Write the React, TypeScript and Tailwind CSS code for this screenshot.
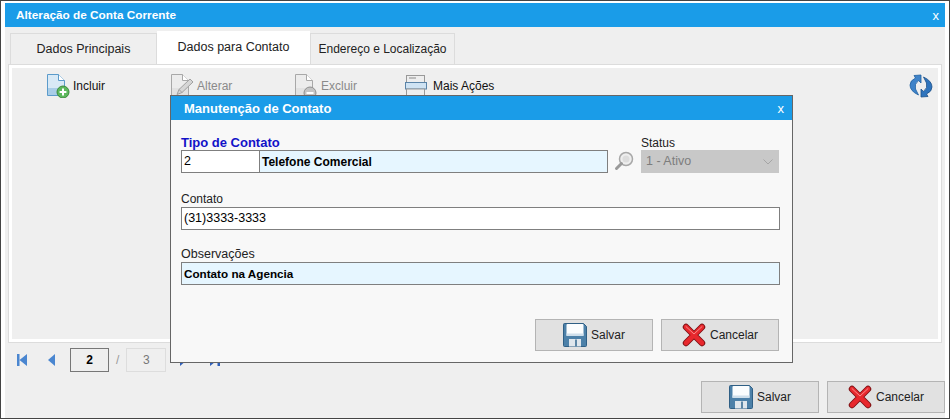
import { ReactNode } from 'react'

function SaveIcon() {
  return (
    <svg width="24" height="24" viewBox="0 0 24 24">
      <path d="M.5 1.5 Q.5 .5 1.5 .5 H20.5 L23.5 3.5 V22.5 Q23.5 23.5 22.5 23.5 H1.5 Q.5 23.5 .5 22.5 Z" fill="#4c80a8" stroke="#2f5f85" />
      <rect x="3.5" y="1" width="17" height="12" rx="1" fill="#fbfdfe" />
      <rect x="3.5" y="10.5" width="17" height="2.5" fill="#cfdfeb" />
      <rect x="6" y="16" width="12" height="7.5" fill="#dfe6ec" />
      <rect x="12" y="16.5" width="2" height="7" fill="#5c85a5" />
    </svg>
  )
}

function CancelIcon() {
  return (
    <svg width="24" height="24" viewBox="0 0 24 24">
      <path d="M4 4 L20 20 M20 4 L4 20" stroke="#7c0f12" strokeWidth="6.4" strokeLinecap="round" />
      <path d="M4 4 L20 20 M20 4 L4 20" stroke="#e8282d" strokeWidth="4.6" strokeLinecap="round" />
      <path d="M4 3.6 L12 11 L20 3.6" stroke="#f98a8a" strokeWidth="1" fill="none" strokeLinecap="round" />
    </svg>
  )
}

function DocIcon({ kind }: { kind: 'add' | 'edit' | 'remove' }) {
  const muted = kind !== 'add'
  const fill = muted ? '#ececec' : '#d8e9f6'
  const line = muted ? '#a8a8a8' : '#5b9bcb'
  return (
    <svg width="24" height="24" viewBox="0 0 24 24">
      <path d="M1.5 .5 H12.5 L18.5 6.5 V21.5 H1.5 Z" fill={fill} stroke={line} />
      <path d="M12.5 .5 V6.5 H18.5" fill="#fff" stroke={line} />
      <rect x="2" y="14" width="16" height="7" fill={muted ? '#e2e2e2' : '#a9cde8'} />
      {kind === 'add' && (
        <>
          <circle cx="17" cy="18" r="6" fill="#5cb85c" stroke="#3b8a3b" />
          <path d="M13.6 18 H20.4 M17 14.6 V21.4" stroke="#fff" strokeWidth="2" />
        </>
      )}
      {kind === 'edit' && (
        <>
          <path d="M7 20.5 L9 15.5 L20 5 L23 8 L12 18.5 Z" fill="#d6d6d6" stroke="#a0a0a0" />
          <path d="M9 15.5 L12 18.5" stroke="#a0a0a0" />
        </>
      )}
      {kind === 'remove' && (
        <>
          <circle cx="16" cy="19" r="6" fill="#c4c4c4" stroke="#8f8f8f" />
          <path d="M12.5 19 H19.5" stroke="#fff" strokeWidth="2" />
        </>
      )}
    </svg>
  )
}

function Field({ className, children }: { className: string; children?: ReactNode }) {
  return (
    <div className={`flex h-[23px] items-center border border-[#7f7f7f] px-[2px] ${className}`}>
      {children}
    </div>
  )
}

function FooterButton({ icon, label }: { icon: ReactNode; label: string }) {
  return (
    <button className="flex h-[32px] w-[118px] items-center justify-center gap-[4px] border border-[#b4b4b4] bg-[#e1e1e1] text-[12px] text-[#222]">
      {icon}
      {label}
    </button>
  )
}

function Toolbar() {
  return (
    <div className="flex items-start pl-[34px] pt-[6px] text-[12px]">
      <div className="flex w-[124px] items-center gap-[3px] text-[#111]">
        <DocIcon kind="add" />
        Incluir
      </div>
      <div className="flex w-[124px] items-center gap-[3px] text-[#8a8a8a]">
        <DocIcon kind="edit" />
        Alterar
      </div>
      <div className="flex w-[110px] items-center gap-[3px] text-[#8a8a8a]">
        <DocIcon kind="remove" />
        Excluir
      </div>
      <div className="flex items-center gap-[5px] text-[#111]">
        <svg width="24" height="24" viewBox="0 0 24 24">
          <rect x="2.5" y="1.5" width="18" height="7" fill="#eee" stroke="#999" />
          <path d="M5 4 H12 M5 11 H12" stroke="#8a8a8a" />
          <rect x="1.5" y="8.5" width="21" height="6.5" fill="#cfe3f3" stroke="#5b84a8" />
          <rect x="2.5" y="15" width="18" height="7" fill="#eee" stroke="#999" />
        </svg>
        Mais Ações
      </div>
      <svg className="ml-auto mr-[5px]" width="24" height="24" viewBox="0 0 24 24">
        <path d="M12 1 V9 L9.5 6.5 Q5 10 6.5 15 L9.5 21 Q1 17 1 11 Q1 6.5 6.5 4 L5 1.5 Z" fill="#3f83c9" stroke="#1f5f9f" strokeWidth=".8" />
        <path d="M12 23 V15 L14.5 17.5 Q19 14 17.5 9 L14.5 3 Q23 7 23 13 Q23 17.5 17.5 20 L19 22.5 Z" fill="#2f74bd" stroke="#1d5088" strokeWidth=".8" />
      </svg>
    </div>
  )
}

function ContactDialog() {
  return (
    <div className="absolute left-[169px] top-[94px] flex h-[268px] w-[623px] flex-col border border-[#666] bg-[#f8f8f8]">
      <div className="flex h-[24px] shrink-0 items-center justify-between bg-[#1a9ce8] pl-[13px] pr-[8px] pt-[1px] text-white">
        <span className="text-[13px] font-bold">Manutenção de Contato</span>
        <span className="text-[13px]">x</span>
      </div>
      <div className="flex flex-col px-[10px] pt-[15px]">
        <div className="flex items-end">
          <div className="flex flex-col">
            <span className="text-[13px] font-bold leading-[15px] text-[#1212c8]">Tipo de Contato</span>
            <div className="flex text-[12px]">
              <Field className="w-[79px] bg-white text-[12.5px]">2</Field>
              <Field className="w-[348px] border-l-0 bg-[#e6f6ff] font-bold">Telefone Comercial</Field>
            </div>
          </div>
          <svg className="mx-[6px] mb-[2px]" width="20" height="20" viewBox="0 0 20 20">
            <circle cx="12" cy="8" r="6.5" fill="#eeeeee" stroke="#a8a8a8" strokeWidth="1.5" />
            <circle cx="12" cy="8" r="3.5" fill="#dddddd" />
            <path d="M7.5 12.5 L2.5 17.5" stroke="#9a9a9a" strokeWidth="3" strokeLinecap="round" />
          </svg>
          <div className="ml-[1px] flex flex-col">
            <span className="text-[12px] leading-[14px] text-[#222]">Status</span>
            <div className="flex h-[23px] w-[138px] items-center justify-between bg-[#c8c8c8] px-[5px] text-[12.5px] text-[#7d7d7d]">
              1 - Ativo
              <svg width="12" height="8" viewBox="0 0 12 8">
                <path d="M1.5 1.5 L6 6 L10.5 1.5" fill="none" stroke="#a5a5a5" />
              </svg>
            </div>
          </div>
        </div>
        <span className="mt-[19px] text-[12px] leading-[15px] text-[#222]">Contato</span>
        <Field className="w-[599px] bg-white text-[12.5px]">(31)3333-3333</Field>
        <span className="mt-[17px] text-[12.5px] leading-[15px] text-[#222]">Observações</span>
        <Field className="w-[599px] bg-[#e6f6ff] text-[11.7px] font-bold">Contato na Agencia</Field>
      </div>
      <div className="mt-auto flex justify-end gap-[8px] pb-[11px] pr-[13px]">
        <FooterButton icon={<SaveIcon />} label="Salvar" />
        <FooterButton icon={<CancelIcon />} label="Cancelar" />
      </div>
    </div>
  )
}

export default function App() {
  return (
    <div className="relative flex h-[419px] w-[950px] flex-col overflow-hidden border border-[#444] bg-white pl-[4px] pr-[4px] pt-[2px] font-['Liberation_Sans',sans-serif]">
      <div className="flex h-[24px] shrink-0 items-center justify-between bg-[#1a9ce8] pl-[11px] pr-[6px] pt-[1px] text-white">
        <span className="text-[11.8px] font-bold">Alteração de Conta Corrente</span>
        <span className="text-[13px]">x</span>
      </div>
      <div className="flex flex-1 flex-col bg-[#efefef]">
        <div className="flex h-[37px] items-end pl-[5px] text-[12.5px] text-[#222]">
          <div className="flex h-[31px] w-[147px] items-center justify-center border border-b-0 border-[#dcdcdc]">Dados Principais</div>
          <div className="mb-[-1px] flex h-[34px] w-[153px] items-center justify-center bg-white pb-[2px]">Dados para Contato</div>
          <div className="flex h-[31px] w-[145px] items-center justify-center border border-b-0 border-[#dcdcdc] text-[12px]">Endereço e Localização</div>
        </div>
        <div className="mx-[3px] h-[279px] border-[1px] border-[#dcdcdc]">
          <div className="h-full border-[3px] border-white">
            <Toolbar />
          </div>
        </div>
        <div className="flex items-center pl-[11px] pt-[5px] text-[12px]">
          <svg width="12" height="14" viewBox="0 0 12 14">
            <path d="M1 1 H3.5 V13 H1 Z M11 1 V13 L3.5 7 Z" fill="#4a86d0" />
          </svg>
          <svg className="ml-[19px]" width="9" height="14" viewBox="0 0 9 14">
            <path d="M8 1 V13 L1 7 Z" fill="#4a86d0" />
          </svg>
          <div className="ml-[14px] flex h-[24px] w-[39px] items-center justify-center border border-[#777] font-bold">2</div>
          <span className="mx-[7px] text-[#999]">/</span>
          <div className="flex h-[24px] w-[40px] items-center justify-center border border-[#ddd] text-[#777]">3</div>
          <svg className="ml-[13px]" width="9" height="14" viewBox="0 0 9 14">
            <path d="M1 1 V13 L8 7 Z" fill="#2f5fb8" />
          </svg>
          <svg className="ml-[21px]" width="12" height="14" viewBox="0 0 12 14">
            <path d="M1 1 V13 L8.5 7 Z M8.5 1 H11 V13 H8.5 Z" fill="#2f5fb8" />
          </svg>
        </div>
        <div className="mt-auto flex justify-end gap-[8px] pb-[5px]">
          <FooterButton icon={<SaveIcon />} label="Salvar" />
          <FooterButton icon={<CancelIcon />} label="Cancelar" />
        </div>
      </div>
      <ContactDialog />
    </div>
  )
}
